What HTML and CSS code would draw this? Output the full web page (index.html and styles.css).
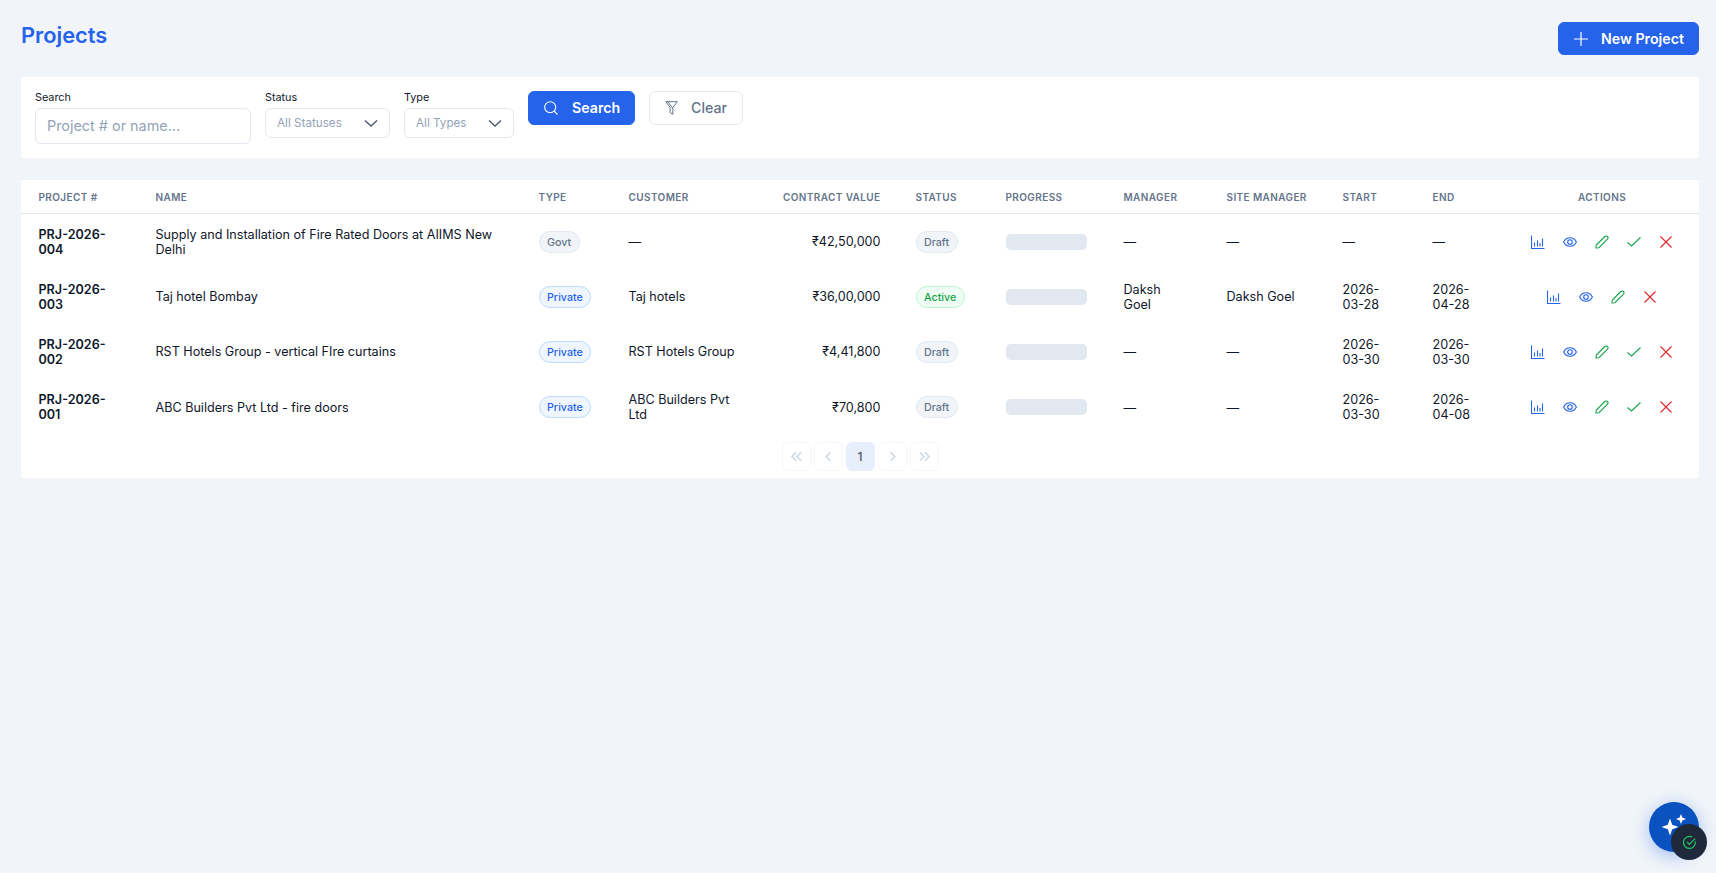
FILE: index.html
```html
<!DOCTYPE html>
<html lang="en">
<head>
    <meta charset="UTF-8">
    <meta name="viewport" content="width=device-width, initial-scale=1.0">
    <title>Projects</title>
    <link rel="stylesheet" href="styles.css">
</head>
<body>
    <svg class="icon-defs" width="0" height="0">
        <defs>
            <symbol id="i-chart" viewBox="0 0 14 14"><path d="M.5.5v13h13M3.500 11.500v-4M6.500 11.500v-6M9 11.500V8M11.500 11.500v-8"/></symbol>
            <symbol id="i-eye" viewBox="0 0 14 14"><path d="M.6 7C2 4.300 4.300 2.800 7 2.800s5 1.500 6.400 4.200c-1.400 2.700-3.700 4.200-6.400 4.200S2 9.700.6 7z"/><circle cx="7" cy="7" r="2.300"/></symbol>
            <symbol id="i-pencil" viewBox="0 0 14 14"><path d="M1 13l.3-3L9.800 1.500a1.800 1.800 0 0 1 2.700 2.700L4 12.700z"/></symbol>
            <symbol id="i-check" viewBox="0 0 14 14"><path d="M.5 7.500l4 3.500 9-8.500"/></symbol>
            <symbol id="i-times" viewBox="0 0 14 14"><path d="M1.500 1.500l11 11M12.500 1.500l-11 11"/></symbol>
            <symbol id="i-down" viewBox="0 0 14 14"><path d="M1 4.500l6 5.500 6-5.500"/></symbol>
        </defs>
    </svg>

    <div class="page-head">
        <h1 class="page-title">Projects</h1>
        <button class="btn btn-primary btn-new">
            <svg class="icon icon-plus" viewBox="0 0 14 14"><path d="M7 0v14M0 7h14"/></svg>
            <span>New Project</span>
        </button>
    </div>

    <div class="filter-card">
        <div class="field">
            <label for="search">Search</label>
            <input type="text" id="search" class="search-input" placeholder="Project # or name...">
        </div>
        <div class="field">
            <label>Status</label>
            <div class="fake-select status-select"><span>All Statuses</span> <svg class="icon icon-down"><use href="#i-down"/></svg></div>
        </div>
        <div class="field">
            <label>Type</label>
            <div class="fake-select type-select"><span>All Types</span> <svg class="icon icon-down"><use href="#i-down"/></svg></div>
        </div>
        <button class="btn btn-primary btn-search">
            <svg class="icon icon-search" viewBox="0 0 14 14"><circle cx="6.200" cy="6.200" r="5.500"/><path d="M10.200 10.200L13.500 13.500"/></svg>
            <span>Search</span>
        </button>
        <button class="btn btn-clear">
            <svg class="icon icon-filter" viewBox="0 0 13 14"><path d="M.7.7h11.600L7.900 6.300v7L5.100 11.500V6.300zM2.800.7l4.800 6.400"/></svg>
            <span>Clear</span>
        </button>
    </div>

    <div class="table-card">
        <table class="projects">
            <colgroup>
                <col class="c-num"><col class="c-name"><col class="c-type"><col class="c-cust"><col class="c-value"><col class="c-status"><col class="c-prog"><col class="c-mgr"><col class="c-site"><col class="c-start"><col class="c-end"><col class="c-act">
            </colgroup>
            <thead>
                <tr>
                    <th>Project #</th><th>Name</th><th>Type</th><th>Customer</th><th class="right">Contract Value</th><th>Status</th><th>Progress</th><th>Manager</th><th>Site Manager</th><th>Start</th><th>End</th><th class="center">Actions</th>
                </tr>
            </thead>
            <tbody>
                <tr>
                    <td class="num">PRJ-2026-004</td>
                    <td>Supply and Installation of Fire Rated Doors at AIIMS New Delhi</td>
                    <td><span class="tag tag-grey">Govt</span></td>
                    <td>—</td>
                    <td class="right">₹42,50,000</td>
                    <td><span class="tag tag-grey">Draft</span></td>
                    <td><div class="bar"></div></td>
                    <td>—</td><td>—</td><td>—</td><td>—</td>
                    <td><div class="actions">
                        <svg class="icon blue"><use href="#i-chart"/></svg>
                        <svg class="icon blue"><use href="#i-eye"/></svg>
                        <svg class="icon green"><use href="#i-pencil"/></svg>
                        <svg class="icon green"><use href="#i-check"/></svg>
                        <svg class="icon red"><use href="#i-times"/></svg>
                    </div></td>
                </tr>
                <tr>
                    <td class="num">PRJ-2026-003</td>
                    <td>Taj hotel Bombay</td>
                    <td><span class="tag tag-blue">Private</span></td>
                    <td>Taj hotels</td>
                    <td class="right">₹36,00,000</td>
                    <td><span class="tag tag-green">Active</span></td>
                    <td><div class="bar"></div></td>
                    <td>Daksh Goel</td><td>Daksh Goel</td><td>2026-03-28</td><td>2026-04-28</td>
                    <td><div class="actions">
                        <svg class="icon blue"><use href="#i-chart"/></svg>
                        <svg class="icon blue"><use href="#i-eye"/></svg>
                        <svg class="icon green"><use href="#i-pencil"/></svg>
                        <svg class="icon red"><use href="#i-times"/></svg>
                    </div></td>
                </tr>
                <tr>
                    <td class="num">PRJ-2026-002</td>
                    <td>RST Hotels Group - vertical FIre curtains</td>
                    <td><span class="tag tag-blue">Private</span></td>
                    <td>RST Hotels Group</td>
                    <td class="right">₹4,41,800</td>
                    <td><span class="tag tag-grey">Draft</span></td>
                    <td><div class="bar"></div></td>
                    <td>—</td><td>—</td><td>2026-03-30</td><td>2026-03-30</td>
                    <td><div class="actions">
                        <svg class="icon blue"><use href="#i-chart"/></svg>
                        <svg class="icon blue"><use href="#i-eye"/></svg>
                        <svg class="icon green"><use href="#i-pencil"/></svg>
                        <svg class="icon green"><use href="#i-check"/></svg>
                        <svg class="icon red"><use href="#i-times"/></svg>
                    </div></td>
                </tr>
                <tr>
                    <td class="num">PRJ-2026-001</td>
                    <td>ABC Builders Pvt Ltd - fire doors</td>
                    <td><span class="tag tag-blue">Private</span></td>
                    <td>ABC Builders Pvt Ltd</td>
                    <td class="right">₹70,800</td>
                    <td><span class="tag tag-grey">Draft</span></td>
                    <td><div class="bar"></div></td>
                    <td>—</td><td>—</td><td>2026-03-30</td><td>2026-04-08</td>
                    <td><div class="actions">
                        <svg class="icon blue"><use href="#i-chart"/></svg>
                        <svg class="icon blue"><use href="#i-eye"/></svg>
                        <svg class="icon green"><use href="#i-pencil"/></svg>
                        <svg class="icon green"><use href="#i-check"/></svg>
                        <svg class="icon red"><use href="#i-times"/></svg>
                    </div></td>
                </tr>
            </tbody>
        </table>
        <div class="pager">
            <span class="page-btn"><svg class="icon" viewBox="0 0 14 14"><path d="M6.500 2.500L2 7l4.500 4.500M12 2.500L7.500 7l4.500 4.500"/></svg></span>
            <span class="page-btn"><svg class="icon" viewBox="0 0 14 14"><path d="M9 2.500L4.500 7 9 11.500"/></svg></span>
            <span class="page-btn current">1</span>
            <span class="page-btn"><svg class="icon" viewBox="0 0 14 14"><path d="M5 2.500L9.500 7 5 11.500"/></svg></span>
            <span class="page-btn"><svg class="icon" viewBox="0 0 14 14"><path d="M2 2.500L6.500 7 2 11.500M7.500 2.500L12 7l-4.500 4.500"/></svg></span>
        </div>
    </div>

    <button class="fab">
        <svg viewBox="0 0 24 24" class="fab-icon"><path d="M7 3.500l2.200 6.300 6.300 2.200-6.300 2.200L7 20.500l-2.200-6.300L-1.500 12l6.300-2.200zM18 -1l1.400 3.600L23 4l-3.600 1.400L18 9l-1.400-3.600L13 4l3.600-1.400z"/></svg>
    </button>
    <div class="status-dot">
        <svg viewBox="0 0 16 16" class="dot-icon"><path d="M14.200 6.700A6.400 6.400 0 1 1 10.800 2.200M5.300 7.500l2.500 2.500L14 3.800"/></svg>
    </div>
</body>
</html>
```

FILE: styles.css
```css
* {
    box-sizing: border-box;
}

html,
body {
    margin: 0;
    height: 100%;
}

body {
    background: #f1f5f9;
    padding: 22px 17px 0 21px;
    font-family: Inter, "Liberation Sans", sans-serif;
    color: #0f172a;
    overflow: hidden;
}

.icon-defs {
    position: absolute;
}

.icon {
    width: 14px;
    height: 14px;
    fill: none;
    stroke: currentColor;
    stroke-width: 1.1;
    flex: none;
}

.blue { color: #2563eb; }
.green { color: #16a34a; }
.red { color: #dc2626; }

.page-head {
    display: flex;
    justify-content: space-between;
    align-items: flex-start;
    margin-bottom: 22px;
}

.page-title {
    margin: 0;
    font-size: 21.8px;
    line-height: 26px;
    font-weight: 600;
    color: #2563eb;
}

.btn {
    display: flex;
    align-items: center;
    font-family: inherit;
    font-size: 14.2px;
    border-radius: 6px;
    cursor: pointer;
}

.btn span {
    position: relative;
    top: -1px;
}

.btn-primary {
    background: #2563eb;
    border: 1px solid #2563eb;
    color: #fff;
    font-weight: 600;
}

.btn-new {
    width: 141px;
    height: 33px;
    padding: 0 0 0 15px;
    gap: 13px;
}

.btn-new span {
    top: 0;
}

.icon-plus {
    stroke-width: 1.2;
}

.filter-card {
    display: flex;
    align-items: flex-start;
    gap: 14px;
    height: 81px;
    padding: 14px;
    background: #fff;
    margin-bottom: 22px;
}

.field label {
    display: block;
    font-size: 10.8px;
    line-height: 14px;
    height: 17px;
    color: #0f172a;
}

.search-input {
    display: block;
    width: 216px;
    height: 36px;
    padding: 0 11px 2px;
    border: 1px solid #e2e8f0;
    border-radius: 6px;
    font-family: inherit;
    font-size: 14.4px;
    color: #0f172a;
}

.search-input::placeholder {
    color: #94a3b8;
}

.fake-select {
    display: flex;
    align-items: center;
    justify-content: space-between;
    height: 30px;
    padding: 0 11px;
    border: 1px solid #e2e8f0;
    border-radius: 6px;
    font-size: 11.7px;
    color: #94a3b8;
}

.status-select { width: 125px; }
.type-select { width: 110px; }

.icon-down {
    color: #475569;
    stroke-width: 1.3;
}

.btn-search {
    width: 107px;
    height: 34px;
    padding: 0 0 0 15px;
    gap: 14px;
}

.btn-clear {
    width: 94px;
    height: 34px;
    padding: 0 0 0 15px;
    gap: 13px;
    background: #fff;
    border: 1px solid #e2e8f0;
    color: #64748b;
    font-weight: 500;
}

.icon-filter {
    width: 13px;
    height: 14px;
    stroke-width: 1;
}

.table-card {
    background: #fff;
    height: 298px;
}

.projects {
    width: 100%;
    table-layout: fixed;
    border-collapse: collapse;
}

.c-num { width: 117px; }
.c-name { width: 383px; }
.c-type { width: 90px; }
.c-cust { width: 142px; }
.c-value { width: 145px; }
.c-status { width: 90px; }
.c-prog { width: 118px; }
.c-mgr { width: 103px; }
.c-site { width: 116px; }
.c-start { width: 90px; }
.c-end { width: 90px; }

.projects th {
    height: 33px;
    padding: 2px 17.5px 0;
    text-align: left;
    font-size: 10px;
    font-weight: 600;
    letter-spacing: 0.4px;
    text-transform: uppercase;
    color: #64748b;
    border-bottom: 1px solid #e2e8f0;
}

.projects td {
    height: 55.2px;
    padding: 2px 17.5px 0;
    font-size: 12.6px;
    line-height: 15px;
    color: #0f172a;
    vertical-align: middle;
}

.projects .right { text-align: right; }
.projects .center { text-align: center; }

.projects .num {
    font-weight: 600;
}

.tag {
    display: inline-block;
    height: 22px;
    line-height: 21px;
    padding: 0 7.5px;
    border: 1px solid;
    border-radius: 11px;
    font-size: 10.7px;
    font-weight: 500;
    vertical-align: middle;
}

.tag-grey {
    background: #f1f5f9;
    border-color: #e2e8f0;
    color: #64748b;
}

.tag-blue {
    background: #eff6ff;
    border-color: #bfdbfe;
    color: #2563eb;
}

.tag-green {
    background: #f0fdf4;
    border-color: #bbf7d0;
    color: #16a34a;
}

.bar {
    width: 81px;
    height: 16px;
    border-radius: 5px;
    background: #e2e8f0;
}

.actions {
    display: flex;
    justify-content: center;
    gap: 18px;
}

.pager {
    display: flex;
    justify-content: center;
    gap: 3px;
    padding-top: 8px;
}

.page-btn {
    display: flex;
    align-items: center;
    justify-content: center;
    width: 29px;
    height: 29px;
    border: 1px solid #f4f6fa;
    border-radius: 6px;
    color: #cbd5e1;
    font-size: 12px;
    font-weight: 500;
}

.page-btn .icon {
    width: 13px;
    height: 13px;
    stroke-width: 1.5;
}

.page-btn.current {
    background: #e8effc;
    border-color: #e8effc;
    color: #475569;
}

.fab {
    position: fixed;
    left: 1649px;
    top: 802px;
    width: 50px;
    height: 50px;
    padding: 0;
    border: 0;
    border-radius: 50%;
    background: #0a52bf;
    box-shadow: 0 4px 18px rgba(37, 99, 235, 0.4);
}

.fab-icon {
    position: absolute;
    left: 14px;
    top: 13px;
    width: 24px;
    height: 24px;
    fill: #fff;
    overflow: visible;
}

.status-dot {
    position: fixed;
    left: 1671px;
    top: 824px;
    width: 36px;
    height: 36px;
    display: flex;
    align-items: center;
    justify-content: center;
    border-radius: 50%;
    background: #1e293b;
}

.dot-icon {
    width: 15px;
    height: 15px;
    fill: none;
    stroke: #22c55e;
    stroke-width: 1.3;
}
```
